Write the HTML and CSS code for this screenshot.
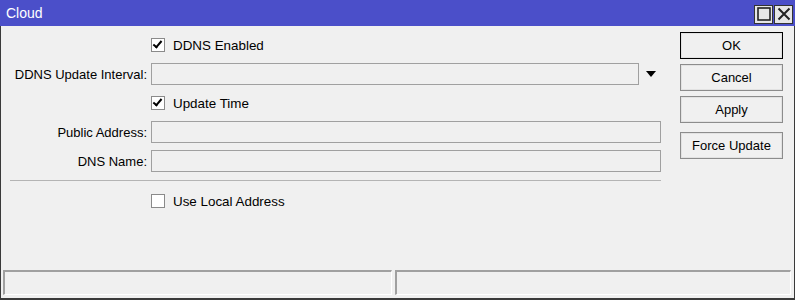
FILE: index.html
```html
<!DOCTYPE html>
<html lang="en">
<head>
  <meta charset="UTF-8">
  <title>Cloud</title>
  <link rel="stylesheet" href="styles.css">
</head>
<body>
  <div class="window">
    <div class="titlebar">
      <span class="title">Cloud</span>
      <div class="title-buttons">
        <span class="tbtn">
          <svg width="14" height="14" viewBox="0 0 14 14"><rect x="1" y="1" width="12" height="12" fill="none" stroke="#222" stroke-width="1.6"/></svg>
        </span>
        <span class="tbtn">
          <svg width="14" height="14" viewBox="0 0 14 14"><path d="M1.5 1.5 L12.5 12.5 M12.5 1.5 L1.5 12.5" stroke="#222" stroke-width="2"/></svg>
        </span>
      </div>
    </div>

    <div class="content">
      <form class="form">
        <div class="row">
          <span class="label"></span>
          <label class="check"><span class="box checked"></span>DDNS Enabled</label>
        </div>
        <div class="row">
          <span class="label">DDNS Update Interval:</span>
          <span class="field short"></span>
          <span class="arrow"></span>
        </div>
        <div class="row">
          <span class="label"></span>
          <label class="check"><span class="box checked"></span>Update Time</label>
        </div>
        <div class="row">
          <span class="label">Public Address:</span>
          <span class="field"></span>
        </div>
        <div class="row">
          <span class="label">DNS Name:</span>
          <span class="field"></span>
        </div>
        <hr class="sep">
        <div class="row">
          <span class="label"></span>
          <label class="check"><span class="box"></span>Use Local Address</label>
        </div>
      </form>

      <div class="buttons">
        <button type="button" class="btn default">OK</button>
        <button type="button" class="btn">Cancel</button>
        <button type="button" class="btn">Apply</button>
        <button type="button" class="btn extra">Force Update</button>
      </div>
    </div>

    <div class="statusbar">
      <div class="panel"></div>
      <div class="panel"></div>
    </div>
  </div>
</body>
</html>
```

FILE: styles.css
```css
body {
  margin: 0;
  font-family: "Liberation Sans", Arial, sans-serif;
  font-size: 13px;
  color: #000;
}
.window {
  width: 795px;
  height: 300px;
  box-sizing: border-box;
  border: 1px solid #3a3a3a;
  border-top: none;
  border-bottom-width: 2px;
  background: #f0f0f0;
  display: flex;
  flex-direction: column;
}
.titlebar {
  height: 26px;
  margin: 0 -1px;
  background: #4b4fc9;
  display: flex;
  align-items: center;
  justify-content: space-between;
  padding: 0 2px 0 6px;
}
.title {
  color: #fff;
  font-size: 14px;
}
.title-buttons {
  display: flex;
  gap: 1px;
  margin-top: 2px;
}
.tbtn {
  width: 17px;
  height: 17px;
  border: 1px solid #333;
  background: #e6e6e6;
  display: flex;
  align-items: center;
  justify-content: center;
}
.content {
  flex: 1;
  display: flex;
}
.form {
  width: 660px;
  padding-top: 8px;
  display: flex;
  flex-direction: column;
  gap: 7px;
}
.row {
  height: 22px;
  display: flex;
  align-items: center;
}
.label {
  width: 146px;
  padding-right: 4px;
  text-align: right;
  white-space: nowrap;
}
.field {
  width: 508px;
  height: 20px;
  border: 1px solid #a0a0a0;
}
.field.short {
  width: 486px;
}
.arrow {
  margin-left: 7px;
  width: 0;
  height: 0;
  border-left: 5.5px solid transparent;
  border-right: 5.5px solid transparent;
  border-top: 6px solid #000;
}
.check {
  display: flex;
  align-items: center;
  font-size: 13.4px;
}
.box {
  width: 12px;
  height: 12px;
  border: 1px solid #8a8a8a;
  background: #fff;
  margin-right: 8px;
  position: relative;
}
.box.checked::after {
  content: "";
  position: absolute;
  left: 3px;
  top: 0px;
  width: 3px;
  height: 7px;
  border: solid #000;
  border-width: 0 2px 2px 0;
  transform: rotate(40deg);
}
.sep {
  margin: 1px 0 2px 9px;
  border: none;
  border-top: 1px solid #b4b4b4;
  height: 0;
}
.buttons {
  margin-left: 19px;
  padding-top: 6px;
  display: flex;
  flex-direction: column;
  gap: 5px;
}
.btn {
  width: 103px;
  height: 27px;
  font-family: inherit;
  font-size: 13px;
  background: #f0f0f0;
  border: 1px solid #8c8c8c;
  box-shadow: inset 0 0 0 1px #e2e2e2;
  padding: 0;
}
.btn.default {
  border-color: #000;
}
.btn.extra {
  margin-top: 4px;
}
.statusbar {
  height: 25px;
  padding: 0 3px 3px 2px;
  display: grid;
  grid-template-columns: 389px 1fr;
  gap: 3px;
}
.panel {
  border-top: 2px solid #a0a0a0;
  border-left: 2px solid #a0a0a0;
  border-right: 1px solid #fff;
  border-bottom: 1px solid #fff;
}
```
